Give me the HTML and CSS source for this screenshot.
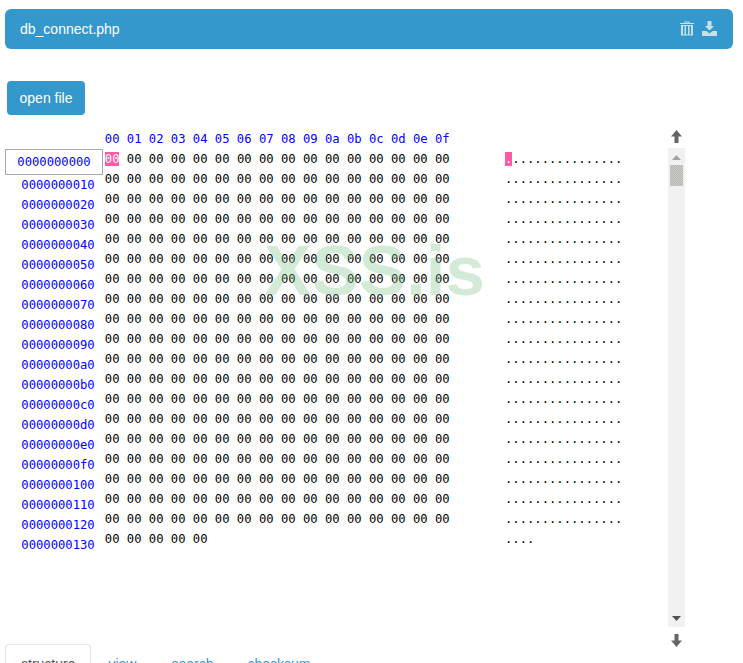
FILE: index.html
```html
<!DOCTYPE html>
<html lang="en">
<head>
<meta charset="utf-8">
<title>db_connect.php</title>
<link rel="stylesheet" href="styles.css">
</head>
<body>
<header class="panel">
  <span class="panel-title">db_connect.php</span>
  <div class="panel-icons">
    <svg class="icon" width="14" height="16" viewBox="0 0 14 16"><path d="M0 3h14v1H0zM4.500 3V1.500h5V3h-1V2.500h-3V3z"/><path d="M1 5h12v10.500H1zM3 6v8.500h1.500V6zM6 6v8.500h2V6zM9.500 6v8.500H11V6z" fill-rule="evenodd"/></svg>
    <svg class="icon" width="15" height="15" viewBox="0 0 15 15"><path d="M5.500 0h4v5H12L7.500 9.500 3 5h2.500z"/><path d="M0 10h4.500l3 2.500 3-2.500H15v5H0z"/></svg>
  </div>
</header>
<button class="open-btn">open file</button>
<main class="editor">
  <div class="offsets">
    <div class="offset current">0000000000</div>
    <div class="offset">0000000010</div>
    <div class="offset">0000000020</div>
    <div class="offset">0000000030</div>
    <div class="offset">0000000040</div>
    <div class="offset">0000000050</div>
    <div class="offset">0000000060</div>
    <div class="offset">0000000070</div>
    <div class="offset">0000000080</div>
    <div class="offset">0000000090</div>
    <div class="offset">00000000a0</div>
    <div class="offset">00000000b0</div>
    <div class="offset">00000000c0</div>
    <div class="offset">00000000d0</div>
    <div class="offset">00000000e0</div>
    <div class="offset">00000000f0</div>
    <div class="offset">0000000100</div>
    <div class="offset">0000000110</div>
    <div class="offset">0000000120</div>
    <div class="offset">0000000130</div>
  </div>
  <div class="hex">
    <div class="row head">00 01 02 03 04 05 06 07 08 09 0a 0b 0c 0d 0e 0f</div>
    <div class="row"><span class="mark">00</span> 00 00 00 00 00 00 00 00 00 00 00 00 00 00 00</div>
    <div class="row">00 00 00 00 00 00 00 00 00 00 00 00 00 00 00 00</div>
    <div class="row">00 00 00 00 00 00 00 00 00 00 00 00 00 00 00 00</div>
    <div class="row">00 00 00 00 00 00 00 00 00 00 00 00 00 00 00 00</div>
    <div class="row">00 00 00 00 00 00 00 00 00 00 00 00 00 00 00 00</div>
    <div class="row">00 00 00 00 00 00 00 00 00 00 00 00 00 00 00 00</div>
    <div class="row">00 00 00 00 00 00 00 00 00 00 00 00 00 00 00 00</div>
    <div class="row">00 00 00 00 00 00 00 00 00 00 00 00 00 00 00 00</div>
    <div class="row">00 00 00 00 00 00 00 00 00 00 00 00 00 00 00 00</div>
    <div class="row">00 00 00 00 00 00 00 00 00 00 00 00 00 00 00 00</div>
    <div class="row">00 00 00 00 00 00 00 00 00 00 00 00 00 00 00 00</div>
    <div class="row">00 00 00 00 00 00 00 00 00 00 00 00 00 00 00 00</div>
    <div class="row">00 00 00 00 00 00 00 00 00 00 00 00 00 00 00 00</div>
    <div class="row">00 00 00 00 00 00 00 00 00 00 00 00 00 00 00 00</div>
    <div class="row">00 00 00 00 00 00 00 00 00 00 00 00 00 00 00 00</div>
    <div class="row">00 00 00 00 00 00 00 00 00 00 00 00 00 00 00 00</div>
    <div class="row">00 00 00 00 00 00 00 00 00 00 00 00 00 00 00 00</div>
    <div class="row">00 00 00 00 00 00 00 00 00 00 00 00 00 00 00 00</div>
    <div class="row">00 00 00 00 00 00 00 00 00 00 00 00 00 00 00 00</div>
    <div class="row">00 00 00 00 00</div>
  </div>
  <div class="ascii">
    <div class="row"><span class="mark">.</span>...............</div>
    <div class="row">................</div>
    <div class="row">................</div>
    <div class="row">................</div>
    <div class="row">................</div>
    <div class="row">................</div>
    <div class="row">................</div>
    <div class="row">................</div>
    <div class="row">................</div>
    <div class="row">................</div>
    <div class="row">................</div>
    <div class="row">................</div>
    <div class="row">................</div>
    <div class="row">................</div>
    <div class="row">................</div>
    <div class="row">................</div>
    <div class="row">................</div>
    <div class="row">................</div>
    <div class="row">................</div>
    <div class="row">....</div>
  </div>
  <div class="scrollcol">
    <svg class="arrow" width="11" height="13" viewBox="0 0 11 13"><path d="M5.500 0L11 6.500H7.500V13h-4V6.500H0z"/></svg>
    <div class="track">
      <svg class="tri" width="9" height="5" viewBox="0 0 9 5"><path d="M4.500 0L9 5H0z"/></svg>
      <div class="thumb"></div>
      <svg class="tri tri-down" width="9" height="5" viewBox="0 0 9 5"><path d="M0 0h9L4.500 5z"/></svg>
    </div>
    <svg class="arrow" width="11" height="13" viewBox="0 0 11 13"><path d="M3.500 0h4v6.500H11L5.500 13 0 6.500h3.500z"/></svg>
  </div>
  <div class="watermark">XSS.is</div>
</main>
<nav class="tabs">
  <a class="tab active">structure</a>
  <a class="tab">view</a>
  <a class="tab">search</a>
  <a class="tab">checksum</a>
</nav>
</body>
</html>
```
FILE: styles.css
```css
html, body {
  margin: 0;
  padding: 0;
  height: 663px;
  overflow: hidden;
  background: #fff;
  font-family: "Liberation Sans", Arial, sans-serif;
}
.panel {
  margin: 9px 10px 0 5px;
  height: 40px;
  padding: 0 15px;
  background: #3498cd;
  border-radius: 6px;
  color: #fff;
  font-size: 14px;
  display: flex;
  align-items: center;
  justify-content: space-between;
}
.panel-icons {
  display: flex;
  gap: 8px;
  align-items: center;
  margin-right: 1px;
  margin-top: -2px;
}
.icon { fill: #c4e2e8; display: block; }
.open-btn {
  display: block;
  margin: 32px 0 0 7px;
  width: 78px;
  height: 34px;
  padding: 0;
  border: 0;
  border-radius: 4px;
  background: #3498cd;
  color: #fff;
  font: 14px "Liberation Sans", Arial, sans-serif;
}
.editor {
  position: relative;
  display: flex;
  margin: 14px 0 0 5px;
  height: 515px;
  font-family: "DejaVu Sans Mono", monospace;
  font-size: 12.2px;
}
.offsets {
  width: 98px;
  padding-top: 20px;
  color: #00f;
  text-align: center;
}
.offset {
  height: 20px;
  line-height: 20px;
  padding-left: 8px;
  box-sizing: border-box;
}
.offset.current {
  height: 26px;
  line-height: 24px;
  padding-left: 0;
  border: 1px solid #aaa;
}
.hex { width: 400.200px; margin-left: 1.800px; }
.ascii { width: 163px; padding-top: 20px; }
.row { height: 20px; line-height: 20px; color: #000; white-space: pre; }
.row.head { color: #00f; }
.mark { background: #ff5aa5; color: #fff; }
.scrollcol {
  width: 17px;
  display: flex;
  flex-direction: column;
  align-items: center;
}
.arrow { fill: #666; display: block; margin: 1px 0 0; flex: none; }
.track {
  flex: none;
  margin-top: 5px;
  width: 17px;
  height: 479px;
  background: #f1f1f1;
  display: flex;
  flex-direction: column;
  align-items: center;
}
.track + .arrow { margin-top: 7px; }
.tri { fill: #a3a3a3; display: block; margin-top: 7px; flex: none; }
.tri-down { fill: #505050; margin-top: auto; margin-bottom: 6px; }
.thumb {
  margin-top: 5px;
  width: 13px;
  height: 21px;
  background: #c1c1bd;
  background-image: repeating-conic-gradient(#b4b4b4 0 25%, #cfcfc8 0 50%);
  background-size: 2px 2px;
}
.watermark {
  position: absolute;
  left: 259px;
  top: 102px;
  font-weight: bold;
  font-family: "Liberation Sans", Arial, sans-serif;
  font-size: 71px;
  line-height: 80px;
  color: rgba(120, 190, 130, 0.33);
}
.tabs {
  display: flex;
  margin: 0 0 0 5px;
  font-size: 14px;
}
.tab {
  padding: 9px 15px;
  color: #3498cd;
  border: 1px solid transparent;
  line-height: 20px;
  margin-right: 2px;
}
.tab:nth-child(2) { margin-left: -1px; margin-right: 3px; }
.tab.active {
  color: #555;
  border: 1px solid #e3ebe6;
  border-bottom: 0;
  border-radius: 4px 4px 0 0;
}
```
